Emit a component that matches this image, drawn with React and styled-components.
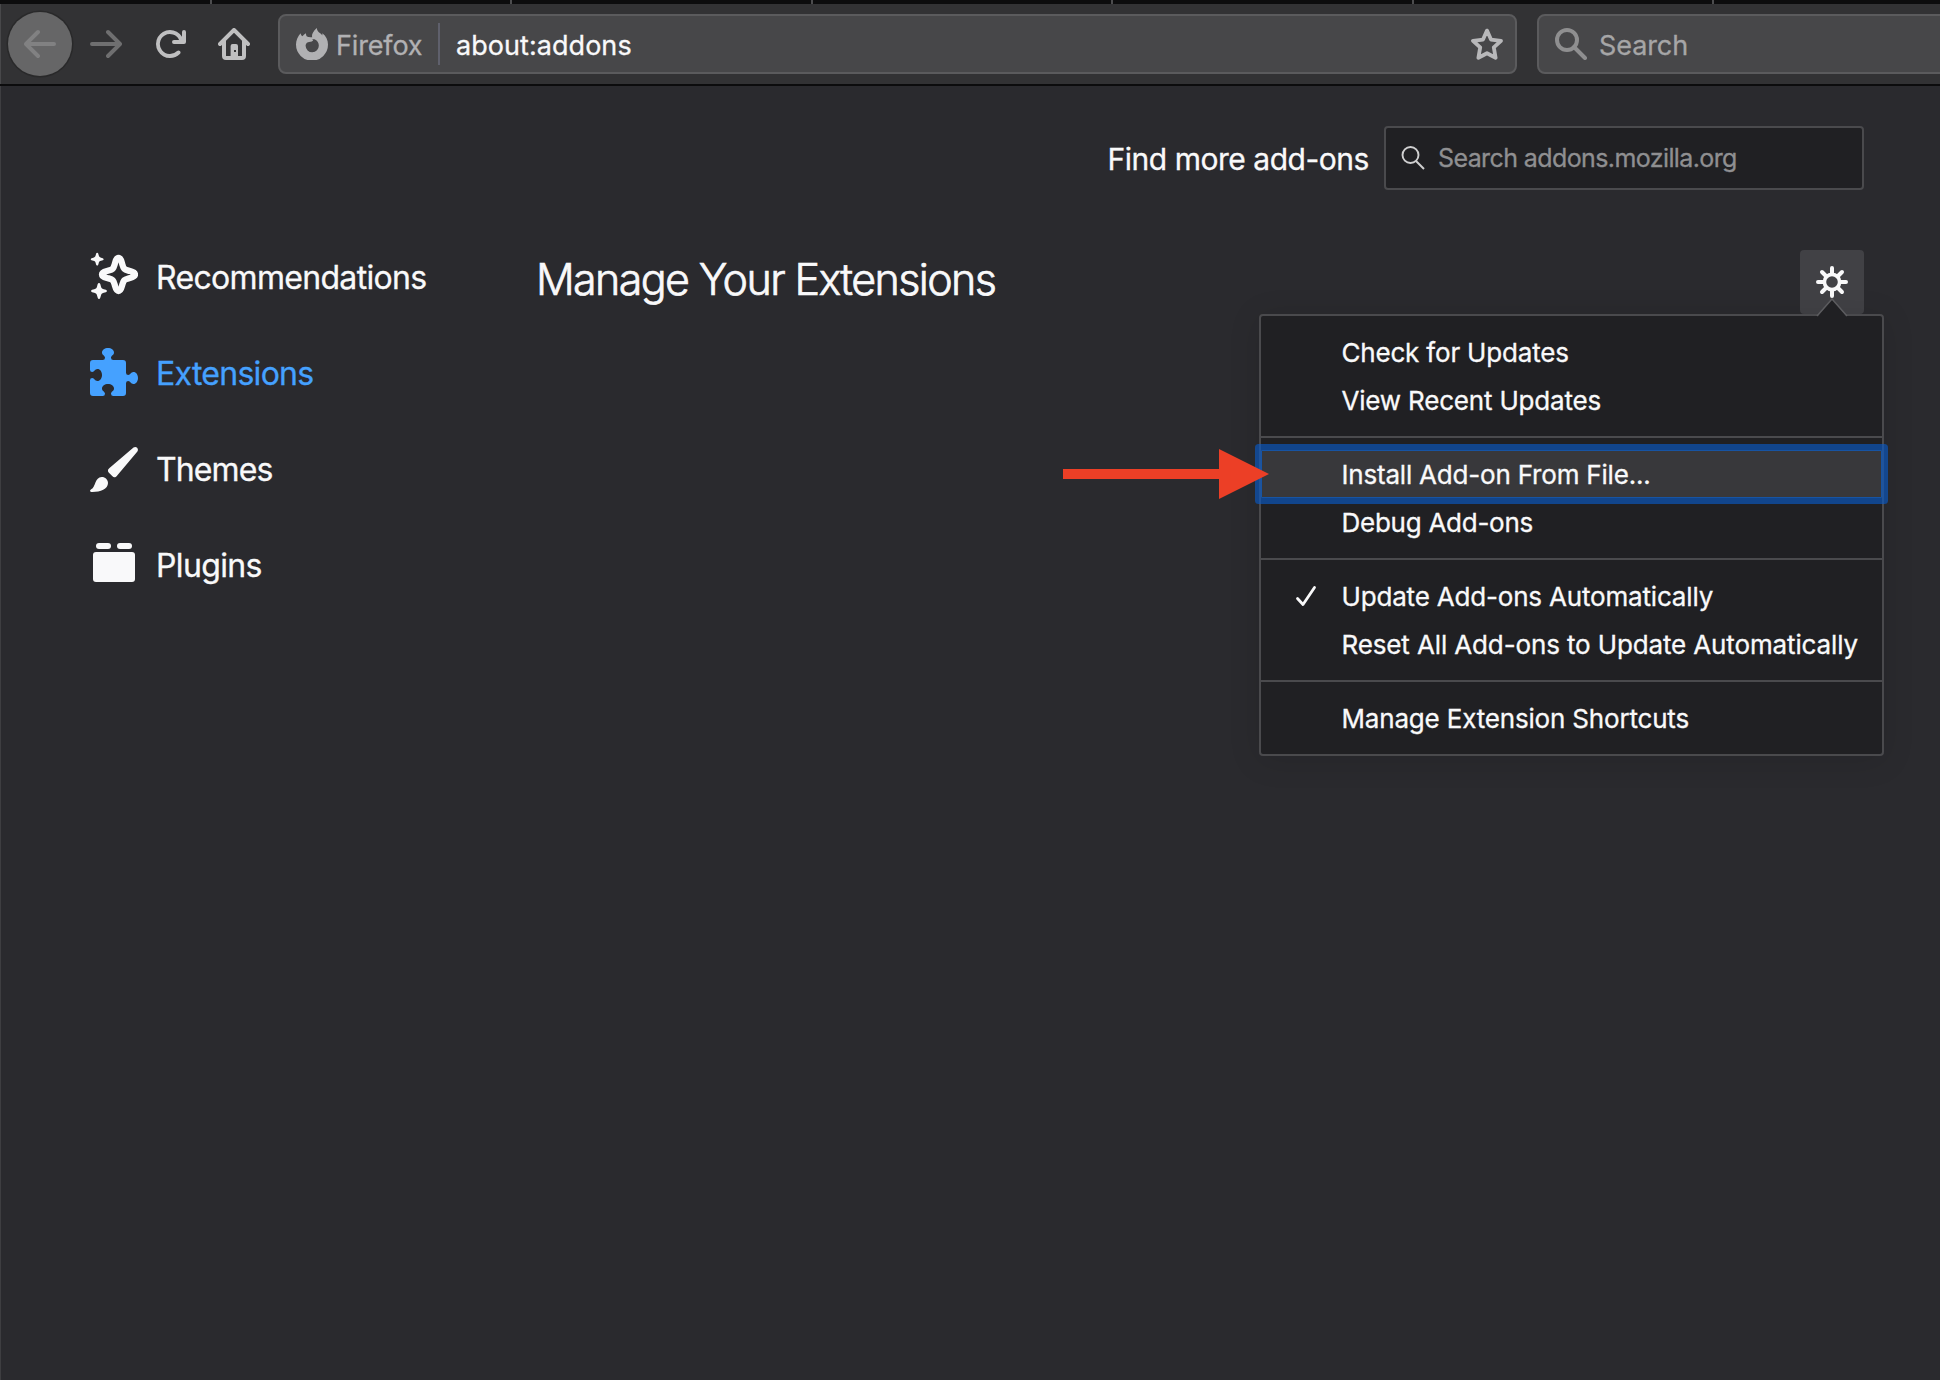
import React from "react";
import styled, { createGlobalStyle } from "styled-components";

const Global = createGlobalStyle`
  * { box-sizing: border-box; }
  html, body { margin: 0; padding: 0; background: #2a2a2e; }
  body { overflow: hidden; font-family: Inter, "Liberation Sans", sans-serif; color: #f9f9fa; }
  button { font: inherit; color: inherit; background: none; border: 0; padding: 0; margin: 0; }
`;

const Window = styled.div`
  width: 1940px;
  height: 1380px;
  overflow: hidden;
  display: flex;
  flex-direction: column;
  background: #2a2a2e;
  box-shadow: inset 1px 0 0 #3e3e41;
  position: relative;
`;

const TabStrip = styled.div`
  display: flex;
  flex: none;
  height: 4px;
  padding-left: 210px;
  gap: 298.4px;
  background: #0c0c0d;
`;

const TabSeparator = styled.span`
  flex: none;
  width: 2px;
  height: 4px;
  background: #4c4c4e;
`;

const Toolbar = styled.div`
  flex: none;
  display: flex;
  align-items: center;
  height: 82px;
  padding-left: 8px;
  background: #323234;
  border-bottom: 2px solid #0c0c0d;
  box-shadow: inset 1px 0 0 #48484a;
`;

const NavButton = styled.button`
  flex: none;
  display: flex;
  align-items: center;
  justify-content: center;
  width: 64px;
  height: 64px;
  color: ${(p) => (p.$dim ? "#6f6f70" : "#bfbfc0")};
`;

const BackButton = styled(NavButton)`
  border-radius: 50%;
  background: #666667;
  color: #818182;
  box-shadow: 0 0 0 1.5px #29292a;
  margin-right: 2px;
`;

const Field = styled.div`
  flex: none;
  display: flex;
  align-items: center;
  width: ${(p) => p.$width}px;
  height: 60px;
  margin-left: ${(p) => p.$gap}px;
  padding: 0 ${(p) => p.$end || 0}px 0 16px;
  border: 2px solid #5b5b5d;
  border-radius: 8px;
  background: #474749;
`;

const Label = styled.span`
  white-space: pre;
  font-size: ${(p) => p.$size}px;
  line-height: 1.2;
  letter-spacing: ${(p) => p.$track || 0}px;
  margin-left: ${(p) => p.$left || 0}px;
  padding-top: ${(p) => p.$drop || 0}px;
  color: ${(p) => p.$color || "inherit"};
  -webkit-text-stroke: 0.3px currentColor;
`;

const TitleText = styled(Label)`
  font-weight: 300;
  -webkit-text-stroke: 0.7px currentColor;
`;

const FieldDivider = styled.span`
  width: 2px;
  height: 42px;
  margin: 0 16px 0 auto;
  background: #5f606c;
`;

const Identity = styled.div`
  display: flex;
  align-items: center;
  width: 160px;
`;

const Spacer = styled.span`
  flex: 1;
`;

const Glyph = styled.svg`
  flex: none;
  display: block;
  width: ${(p) => p.$size || 32}px;
  height: ${(p) => p.$size || 32}px;
  fill: currentColor;
  color: ${(p) => p.$color || "inherit"};
`;

const SearchRow = styled.div`
  flex: none;
  display: flex;
  align-items: center;
  justify-content: flex-end;
  margin-top: 40px;
  padding-right: 76px;
  height: 64px;
`;

const AddonSearch = styled.div`
  display: flex;
  align-items: center;
  width: 480px;
  height: 64px;
  margin-left: 15px;
  padding-left: 15px;
  border: 2px solid #4a4a4d;
  border-radius: 4px;
  background: #202023;
`;

const Body = styled.div`
  display: flex;
  flex: 1;
  padding: 38px 76px 0 90px;
`;

const Sidebar = styled.nav`
  flex: none;
  width: 446px;
  display: flex;
  flex-direction: column;
`;

const Category = styled.button`
  display: flex;
  align-items: center;
  height: 96px;
  color: ${(p) => (p.$active ? "#45a1ff" : "#f9f9fa")};
`;

const Main = styled.main`
  flex: 1;
  padding-top: 22px;
`;

const HeadingRow = styled.div`
  display: flex;
  align-items: center;
  justify-content: space-between;
  height: 64px;
`;

const Title = styled.h1`
  margin: 0;
  padding-bottom: 5px;
  display: flex;
`;

const GearButton = styled.div`
  position: relative;
  display: flex;
  align-items: center;
  justify-content: center;
  width: 64px;
  height: 64px;
  border-radius: 4px;
  background: #414145;
`;

const Menu = styled.div`
  position: absolute;
  top: 64px;
  right: -20px;
  width: 625px;
  border: 2px solid #4a4a4d;
  border-radius: 4px;
  background: #202023;
  box-shadow: 0 4px 32px rgba(12, 12, 13, 0.12);
`;

const MenuArrow = styled.svg`
  position: absolute;
  top: -18px;
  right: 34px;
  width: 32px;
  height: 19px;
`;

const MenuGroup = styled.div`
  display: flex;
  flex-direction: column;
  padding: 12px 0;
  & + & {
    border-top: 2px solid #4a4a4d;
  }
`;

const MenuItem = styled.button`
  display: flex;
  align-items: center;
  height: 48px;
  padding-left: 33px;
  ${(p) =>
    p.$focused &&
    `
    position: relative;
    background: #38383b;
    border-radius: 1px;
    box-shadow: 0 0 0 6px rgba(9, 89, 197, 0.65), inset 0 0 0 1px #1754a3;
  `}
`;

const CheckSlot = styled.span`
  flex: none;
  width: 47.5px;
  height: 24px;
`;

const Pointer = styled.svg`
  position: absolute;
  left: 1063px;
  top: 449px;
  width: 206px;
  height: 50px;
`;

const BACK =
  "M15 7H3.414l4.293-4.293a1 1 0 0 0-1.414-1.414l-6 6a1 1 0 0 0 0 1.414l6 6a1 1 0 0 0 1.414-1.414L3.414 9H15a1 1 0 0 0 0-2z";
const RELOAD =
  "M15 1a1 1 0 0 0-1 1v2.418A6.995 6.995 0 1 0 8 15a6.954 6.954 0 0 0 4.95-2.05 1 1 0 0 0-1.414-1.414A5.019 5.019 0 1 1 12.549 6H10a1 1 0 0 0 0 2h5a1 1 0 0 0 1-1V2a1 1 0 0 0-1-1z";
const HOME =
  "M15.707 7.293l-7-7a1 1 0 0 0-1.414 0l-7 7a1 1 0 0 0 1.414 1.414L2 8.414V14a2 2 0 0 0 2 2h8a2 2 0 0 0 2-2V8.414l.293.293a1 1 0 0 0 1.414-1.414zM4 6.414l4-4 4 4V14h-2V9a1 1 0 0 0-1-1H7.300a1 1 0 0 0-1 1v5H4zM8 11v1h1v-1z";
const FIREFOX =
  "M2.3 2.600c.1.700.4 1.200.9 1.500.600-.600 1.100-1.100 1.800-1.500 0 .700.100 1.200.5 1.700.700.400 1.300.300 2.600.300-.300-.900 0-2.600 2.300-4.600.100 1.300.700 2 1.700 2.600.500.300.800.700 1 1.100.100-.300.100-.700.100-1.100 1.800 1.300 2.800 3.400 2.800 5.700a8 8 0 1 1-16 0c0-2.200.900-4.200 2.300-5.700zM8.400 6.400c-.600.700-1.700.500-2.400.700-.800.300-1.200 1-1.200 1.800a3.300 3.300 0 0 0 6.600-.1c0-1.200-.600-2.300-1.700-2.900-.5-.3-1.300-.3-1.700-.1.500.100.700.400.4.600z";
const PUZZLE =
  "M14.5 8c-.971 0-1 1-1.75 1a.765.765 0 0 1-.75-.75V5a1 1 0 0 0-1-1H7.75A.765.765 0 0 1 7 3.25c0-.75 1-.779 1-1.75C8 .635 7.1 0 6 0S4 .635 4 1.5c0 .971 1 1 1 1.75a.765.765 0 0 1-.75.75H1a1 1 0 0 0-1 1v2.25A.765.765 0 0 0 .75 8c.75 0 .779-1 1.75-1C3.365 7 4 7.9 4 9s-.635 2-1.5 2c-.971 0-1-1-1.75-1a.765.765 0 0 0-.75.75V15a1 1 0 0 0 1 1h3.25a.765.765 0 0 0 .75-.75c0-.75-1-.779-1-1.75 0-.865.9-1.5 2-1.5s2 .635 2 1.5c0 .971-1 1-1 1.75a.765.765 0 0 0 .75.75H11a1 1 0 0 0 1-1v-3.25a.765.765 0 0 1 .75-.75c.75 0 .779 1 1.75 1 .865 0 1.5-.9 1.5-2s-.635-2-1.5-2z";
const SPARK =
  "M0-5.5C.9-5.500 1-4.300 1.300-3.300 1.700-1.900 1.900-1.700 3.300-1.300 4.300-1 5.500-.9 5.500 0S4.300 1 3.300 1.300C1.900 1.700 1.700 1.900 1.300 3.300 1 4.300.9 5.500 0 5.500S-1 4.300-1.300 3.300C-1.700 1.900-1.900 1.700-3.300 1.300-4.300 1-5.500.9-5.500 0S-4.300-1-3.300-1.300C-1.900-1.700-1.700-1.900-1.300-3.300-1-4.300-.9-5.500 0-5.500z";

function Icon({ d, ...rest }) {
  return (
    <Glyph viewBox="0 0 16 16" {...rest}>
      <path fillRule="evenodd" d={d} />
    </Glyph>
  );
}

const SparkIcon = () => (
  <Glyph viewBox="0 0 16 16" $size={48}>
    <path d={SPARK} transform="translate(9.5 7.5)" fill="none" stroke="currentColor" strokeWidth="2.100" />
    <path d={SPARK} transform="translate(2.4 2.4) scale(.39)" />
    <path d={SPARK} transform="translate(3 13) scale(.48)" />
  </Glyph>
);

const BrushIcon = () => (
  <Glyph viewBox="0 0 16 16" $size={48}>
    <path d="M14.500 1.200c.9-.6 1.900.400 1.300 1.300L9 10.600c-.6.700-1.100.6-1.600.1L6.300 9.600c-.5-.5-.4-1.100.2-1.600z" />
    <path d="M3.900 11c1.200 0 2.100.9 2.100 2 0 2-2.500 3-5.200 3-.9 0-1-.6-.4-.9C1.900 14.400 1.600 11 3.900 11z" />
  </Glyph>
);

const PluginIcon = () => (
  <Glyph viewBox="0 0 16 16" $size={48}>
    <rect x="1" y="4" width="14" height="10" rx="1" />
    <rect x="2" y="1" width="5" height="2" rx="1" />
    <rect x="9" y="1" width="5" height="2" rx="1" />
  </Glyph>
);

const GearIcon = () => (
  <Glyph viewBox="-8 -8 16 16">
    <g fill="none" stroke="currentColor" strokeWidth="2" strokeLinecap="round">
      <circle r="3.8" strokeWidth="1.800" />
      <path d="M0-4V-7M0 4V7M-4 0H-7M4 0H7M3 3l2 2M-3-3l-2-2M3-3l2-2M-3 3l-2 2" />
    </g>
  </Glyph>
);

const menuGroups = [
  [
    { text: "Check for Updates", track: -0.19 },
    { text: "View Recent Updates", track: -0.19 },
  ],
  [
    { text: "Install Add-on From File...", track: -0.2, focused: true },
    { text: "Debug Add-ons", track: -0.26 },
  ],
  [
    { text: "Update Add-ons Automatically", track: -0.18, checked: true },
    { text: "Reset All Add-ons to Update Automatically", track: -0.13 },
  ],
  [{ text: "Manage Extension Shortcuts", track: -0.18 }],
];

const categories = [
  { text: "Recommendations", track: -0.68, icon: <SparkIcon /> },
  { text: "Extensions", track: -0.72, icon: <Icon d={PUZZLE} $size={48} />, active: true },
  { text: "Themes", track: -0.9, icon: <BrushIcon /> },
  { text: "Plugins", track: -0.65, icon: <PluginIcon /> },
];

export default function App() {
  return (
    <Window>
      <Global />
      <TabStrip>
        {[0, 1, 2, 3, 4, 5].map((i) => (
          <TabSeparator key={i} />
        ))}
      </TabStrip>
      <Toolbar>
        <BackButton aria-label="Back"><Icon d={BACK} /></BackButton>
        <NavButton $dim aria-label="Forward">
          <Glyph viewBox="0 0 16 16"><path transform="matrix(-1 0 0 1 16 0)" d={BACK} /></Glyph>
        </NavButton>
        <NavButton aria-label="Reload"><Icon d={RELOAD} /></NavButton>
        <NavButton aria-label="Home"><Icon d={HOME} /></NavButton>
        <Field $width={1239} $gap={12} $end={12}>
          <Identity>
            <Icon d={FIREFOX} $color="#b1b1b3" />
            <Label $size={27} $left={8} $drop={5} $track={-0.15} $color="#b1b1b3">Firefox</Label>
            <FieldDivider />
          </Identity>
          <Label $size={27} $drop={5} $track={0.05}>about:addons</Label>
          <Spacer />
          <Glyph viewBox="0 0 16 16" $color="#b8b8ba">
            <path
              d="M8 1.300L10 5.800 15 6.400 11.400 9.700 12.300 14.900 8 12.600 3.700 14.900 4.600 9.700 1 6.400 6 5.800z"
              fill="none" stroke="currentColor" strokeWidth="1.900" strokeLinejoin="round"
            />
          </Glyph>
        </Field>
        <Field $width={460} $gap={20}>
          <Glyph viewBox="0 0 16 16" $color="#8f8f90">
            <path d="M9.500 9.500L15 15" fill="none" stroke="currentColor" strokeWidth="2" strokeLinecap="round" />
            <circle cx="6" cy="6" r="5" fill="none" stroke="currentColor" strokeWidth="2" />
          </Glyph>
          <Label $size={27} $left={12} $drop={5} $track={-0.1} $color="#a6a6a7">Search</Label>
        </Field>
      </Toolbar>

      <SearchRow>
        <Label $size={30} $drop={2} $track={-0.47}>Find more add-ons</Label>
        <AddonSearch>
          <Glyph viewBox="0 0 24 24" $size={24} $color="#d0d0d1">
            <g fill="none" stroke="currentColor" strokeWidth="1.900">
              <circle cx="9.500" cy="9" r="8" />
              <path d="M15 15l8 8" />
            </g>
          </Glyph>
          <Label $size={25} $left={13} $track={-0.6} $color="#8f8f91">Search addons.mozilla.org</Label>
        </AddonSearch>
      </SearchRow>

      <Body>
        <Sidebar>
          {categories.map((c) => (
            <Category key={c.text} $active={c.active}>
              {c.icon}
              <Label $size={32} $left={18} $drop={4} $track={c.track}>{c.text}</Label>
            </Category>
          ))}
        </Sidebar>
        <Main>
          <HeadingRow>
            <Title><TitleText $size={43} $track={-1.62}>Manage Your Extensions</TitleText></Title>
            <GearButton>
              <GearIcon />
              <Menu>
                <MenuArrow viewBox="0 0 32 19">
                  <path d="M1 19L16 1 31 19z" fill="#202023" />
                  <path d="M1 18L16 1 31 18" fill="none" stroke="#5c5c5f" strokeWidth="1.500" />
                </MenuArrow>
                {menuGroups.map((group, i) => (
                  <MenuGroup key={i}>
                    {group.map((item) => (
                      <MenuItem key={item.text} $focused={item.focused}>
                        <CheckSlot>
                          {item.checked && (
                            <Glyph viewBox="0 0 24 24" $size={24}>
                              <path d="M3.500 14.500L9 20.500 20.500 3.500" fill="none" stroke="currentColor" strokeWidth="2.800" strokeLinecap="round" strokeLinejoin="round" />
                            </Glyph>
                          )}
                        </CheckSlot>
                        <Label $size={26} $drop={2} $track={item.track}>{item.text}</Label>
                      </MenuItem>
                    ))}
                  </MenuGroup>
                ))}
              </Menu>
            </GearButton>
          </HeadingRow>
        </Main>
      </Body>

      <Pointer viewBox="0 0 206 50">
        <path d="M0 20H156V0L206 25 156 50V30H0z" fill="#ec3f26" />
      </Pointer>
    </Window>
  );
}
